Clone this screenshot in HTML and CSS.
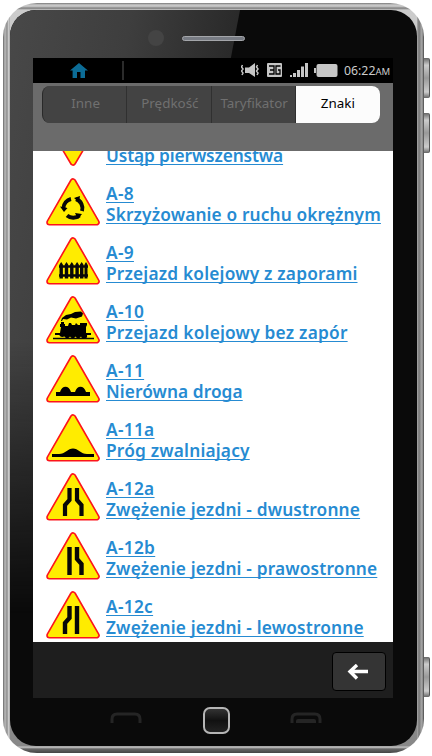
FILE: index.html
```html
<!DOCTYPE html>
<html lang="pl">
<head>
<meta charset="utf-8">
<title>Znaki</title>
<link rel="stylesheet" href="styles.css">
</head>
<body>
<svg class="defs" width="0" height="0" aria-hidden="true">
  <symbol id="plate" viewBox="0 0 54 48"><path d="M27 3.500 50.500 44.300h-47Z" fill="#ffec00" stroke="#fc141b" stroke-width="6.600" stroke-linejoin="round"/><path d="M27 3.500 50.500 44.300h-47Z" fill="#ffec00" stroke="#ffec00" stroke-width="3.400" stroke-linejoin="round"/></symbol>
</svg>
<div class="phone">
  <i class="side s1"></i><i class="side s2"></i><i class="side s3"></i>
  <div class="face">
    <div class="glare"></div>
    <div class="top"><i class="camera"></i><i class="speaker"></i></div>
    <main class="screen">
      <header class="status">
        <svg class="home" width="18" height="15" viewBox="0 0 18 15"><path d="M9 0 0 7.600h2.600V15H7V9h3.500v6h4.500V7.600H18l-3.400-2.800Z" fill="#0c6c96"/></svg>
        <i class="divider"></i>
        <svg class="indicators" width="97" height="17" viewBox="0 0 97 17">
          <g fill="#c6c6c6"><path d="M4 5.500h4L14 1v14L8 11H4Z"/><path d="M1.500 3 .5 5l1.500 2-1.500 2 1.500 2-1 2M16.500 3l-1 2 1.500 2-1.500 2 1.500 2-1 2" fill="none" stroke="#c6c6c6" stroke-width="1.500"/><rect x="26" y="1" width="15" height="14" rx="1"/><path d="M28 4h5v8h-5M29 8h4M39.500 4H35v8h4V8h-2" fill="none" stroke="#000" stroke-width="1.300"/><path d="M49 13h2v2h-2zM52 11h3v4h-3zM56 8h3v7h-3zM60 4.500h3V15h-3zM64 1h3v14h-3z"/><rect x="75.500" y="2" width="21" height="13" rx="2"/><path d="M73 6h2v5h-2z"/></g>
        </svg>
        <span class="clock">06:22<small>AM</small></span>
      </header>
      <div class="nav"><nav class="tabs"><span>Inne</span><span>Prędkość</span><span>Taryfikator</span><span class="on">Znaki</span></nav></div>
      <section class="list">
        <a class="row"><svg width="54" height="48" viewBox="0 0 54 48"><path d="M3.500 3.700h47L27 43.500Z" fill="#ffec00" stroke="#fc141b" stroke-width="6.600" stroke-linejoin="round"/><path d="M3.500 3.700h47L27 43.500Z" fill="#ffec00" stroke="#ffec00" stroke-width="3.400" stroke-linejoin="round"/></svg><span class="label"><u class="w7">Ustąp pierwszeństwa</u></span></a>
        <a class="row"><svg width="54" height="48" viewBox="0 0 54 48"><use href="#plate"/><path d="M17.500 30A9.700 9.700 0 0 1 25 21M30 21A9.700 9.700 0 0 1 36 33M33.500 37.500A9.700 9.700 0 0 1 21 37.500" fill="none" stroke="#080808" stroke-width="4"/><path d="m14 28.500 7.500 1.500-3.500 4zM28 20l6-2-1 6zM36 36l-7-1 3 6z"/></svg><span class="label"><u>A-8</u><u class="w8">Skrzyżowanie o ruchu okrężnym</u></span></a>
        <a class="row"><svg width="54" height="48" viewBox="0 0 54 48"><use href="#plate"/><path d="M13 29.500h29M13 38.500h29" stroke="#080808" stroke-width="2.500"/><path d="M13.500 41.500v-14l1.700-2.500 1.700 2.500v14zM18.800 41.500v-14l1.700-2.500 1.700 2.500v14zM24.100 41.500v-14l1.700-2.500 1.700 2.500v14zM29.400 41.500v-14l1.700-2.500 1.700 2.500v14zM34 41.500v-14l1.700-2.500 1.700 2.500v14zM38.500 41.500v-14l1.500-2.500 1.500 2.500v14z" fill="#080808"/></svg><span class="label"><u>A-9</u><u class="w9">Przejazd kolejowy z zaporami</u></span></a>
        <a class="row"><svg width="54" height="48" viewBox="0 0 54 48"><use href="#plate"/><path d="M7 42.500h41" stroke="#080808" stroke-width="1.300"/><path d="M9 37h5l1-6h-1v-3h1v-2h3v2h1v2h3l1-3h2l1 2h3l1-2 2 2h2v-2h7v2l-1 2v6h5v2h-4a3 3 0 0 1-6 1.500 3 3 0 0 1-5.500 0 3 3 0 0 1-5.500 0 3 3 0 0 1-5.500 0c-3 1-5 0-5-1.500H9zM15 25l1-3 4-3 5-1 4-2 6-.500 2 2-1 3-6 2-5-1-4 2-4-.500-1 2z"/></svg><span class="label"><u>A-10</u><u class="w10">Przejazd kolejowy bez zapór</u></span></a>
        <a class="row"><svg width="54" height="48" viewBox="0 0 54 48"><use href="#plate"/><path d="M10 41v-4h4c2-7 9-7 11 0h4c2-7 9-7 11 0h4v4z"/></svg><span class="label"><u>A-11</u><u class="w11">Nierówna droga</u></span></a>
        <a class="row"><svg width="54" height="48" viewBox="0 0 54 48"><use href="#plate"/><path d="M6 43v-3h7c6 0 9-5.500 14-5.500S35 40 41 40h7v3z"/></svg><span class="label"><u>A-11a</u><u class="w11a">Próg zwalniający</u></span></a>
        <a class="row"><svg width="54" height="48" viewBox="0 0 54 48"><use href="#plate"/><path d="M23.500 15v12l-4.500 5v11M31 15v12l4.500 5v11" fill="none" stroke="#080808" stroke-width="4.200"/></svg><span class="label"><u>A-12a</u><u class="w12a">Zwężenie jezdni - dwustronne</u></span></a>
        <a class="row"><svg width="54" height="48" viewBox="0 0 54 48"><use href="#plate"/><path d="M23.500 15v28M31 15v12l4.500 5v11" fill="none" stroke="#080808" stroke-width="4.400"/></svg><span class="label"><u>A-12b</u><u class="w12b">Zwężenie jezdni - prawostronne</u></span></a>
        <a class="row"><svg width="54" height="48" viewBox="0 0 54 48"><use href="#plate"/><path d="M23.500 15v12l-4.500 5v11M31 15v28" fill="none" stroke="#080808" stroke-width="4.400"/></svg><span class="label"><u>A-12c</u><u class="w12c">Zwężenie jezdni - lewostronne</u></span></a>
      </section>
      <footer class="actions"><button class="back" aria-label="Wstecz"><svg width="22" height="16" viewBox="0 0 22 16"><path d="M21 7.500H3M10 1 3 7.500l7 7" fill="none" stroke="#fff" stroke-width="3.400"/></svg></button></footer>
    </main>
    <div class="keys">
      <svg width="32" height="12" viewBox="0 0 32 12"><path d="M2 11V7q0-5 5-5h18q5 0 5 5v4" fill="none" stroke="#252525" stroke-width="3"/></svg>
      <i class="homekey"></i>
      <svg width="32" height="12" viewBox="0 0 32 12"><path d="M2 11V7q0-5 5-5h18q5 0 5 5v4" fill="none" stroke="#252525" stroke-width="3"/><path d="M6 11V9q0-2 2-2h16q2 0 2 2v2z" fill="#252525"/></svg>
    </div>
  </div>
</div>
</body>
</html>
```
FILE: styles.css
```css
* { box-sizing: border-box; }
body { margin: 0; padding: 3px; background: #fff; font-family: "Noto Sans", sans-serif; overflow: hidden; }
.defs { position: absolute; }
.phone { position: relative; width: 421px; height: 750px; padding: 7px; border-radius: 34px;
  background: linear-gradient(90deg, #666 0, #bbb 2px, #8c8c8c 4px, #ddd 6px, #888 7px, transparent 7px, transparent 414px, #aaa 414px, #777 416px, #aaa 419px, #444),
    linear-gradient(#777 0, #ccc 2px, #bbb 4px, #777 5px, #ccc 7px, #888 743px, #ccc 744px, #666 746px, #444); }
.side { position: absolute; left: 421px; width: 6px; height: 40px; border-right: 1px solid #555; border-radius: 0 2px 2px 0; background: linear-gradient(#666, #ccc 18%, #999 50%, #ccc 85%, #666); }
.s1 { top: 55px; }
.s2 { top: 110px; }
.s3 { top: 654px; }
.face { position: relative; height: 736px; border-radius: 26px; padding: 0 23px; background: #0a0a0a; overflow: hidden; }
.glare { position: absolute; inset: 0; background: linear-gradient(100deg, #484848, #3e3e3e 120px, #292929 230px); clip-path: polygon(0 0, 230px 0, 90px 736px, 0 640px); -webkit-mask-image: linear-gradient(#000 45%, transparent 82%); }
.top { position: relative; height: 48px; }
.camera { position: absolute; left: 115px; top: 20px; width: 16px; height: 16px; border-radius: 50%; background: #444; }
.speaker { position: absolute; left: 149px; top: 26px; width: 63px; height: 5px; border-radius: 3px; border: 1px solid #a4a6aa; background: #777b83; }
.screen { position: relative; width: 360px; height: 640px; background: #fff; }
.status { display: flex; align-items: center; height: 25px; background: #000; color: #ccc; padding-left: 37px; }
.divider { width: 2px; height: 19px; margin-left: 34px; background: #2b2b2b; }
.indicators { margin-left: 117px; }
.clock { font-size: 12.300px; margin-left: 6px; white-space: nowrap; }
.clock small { font-size: 9.500px; }
.nav { height: 68px; background: #6b6b6b; padding: 3px 13px 0 9px; }
.tabs { display: grid; grid-template-columns: repeat(4, 1fr); height: 37px; border-radius: 8px; overflow: hidden; background: #434343; border-left: 1px solid #292929; }
.tabs span { padding-left: 2px; text-align: center; font-size: 13.400px; line-height: 34px; color: #707070; border-right: 1px solid #303030; }
.tabs .on { padding-left: 0; background: #fcfcfc; color: #000; border: 0; }
.list { height: 491px; overflow: hidden; }
.row { display: flex; height: 59px; padding: 4px 0 0 13px; gap: 6px; color: #268bd2; }
.row:first-child { margin-top: -36px; }
.row:first-child .label { padding-top: 26px; }
.row svg { flex: none; }
.label { display: flex; flex-direction: column; align-items: flex-start; padding-top: 5px; font-size: 17.300px; font-weight: 600; line-height: 21px; white-space: nowrap; letter-spacing: .3px; }
.label u { text-decoration-thickness: 1px; text-underline-offset: 2px; text-decoration-skip-ink: none; }
.label .w7 { letter-spacing: -.13px; }
.label .w8 { letter-spacing: .14px; }
.label .w9, .label .w11a { letter-spacing: .19px; }
.label .w10 { letter-spacing: .22px; }
.label .w11 { letter-spacing: .07px; }
.label .w12a, .label .w12b, .label .w12c { letter-spacing: .17px; }
.actions { display: flex; justify-content: flex-end; height: 56px; padding: 10px 7px 0; background: #1e1e1e; }
.back { display: grid; place-items: center; width: 54px; height: 39px; padding: 0 2px 0 0; border: 1px solid #000; border-radius: 4px; background: #343434; }
.keys { position: relative; display: flex; justify-content: space-between; align-items: center; height: 44px; padding: 0 72px 0 77px; }
.keys svg { margin-top: -4px; }
.homekey { width: 27px; height: 27px; border: 2px solid #b5b5b5; border-radius: 7px; background: linear-gradient(#333, #111 50%, #222); }
```
